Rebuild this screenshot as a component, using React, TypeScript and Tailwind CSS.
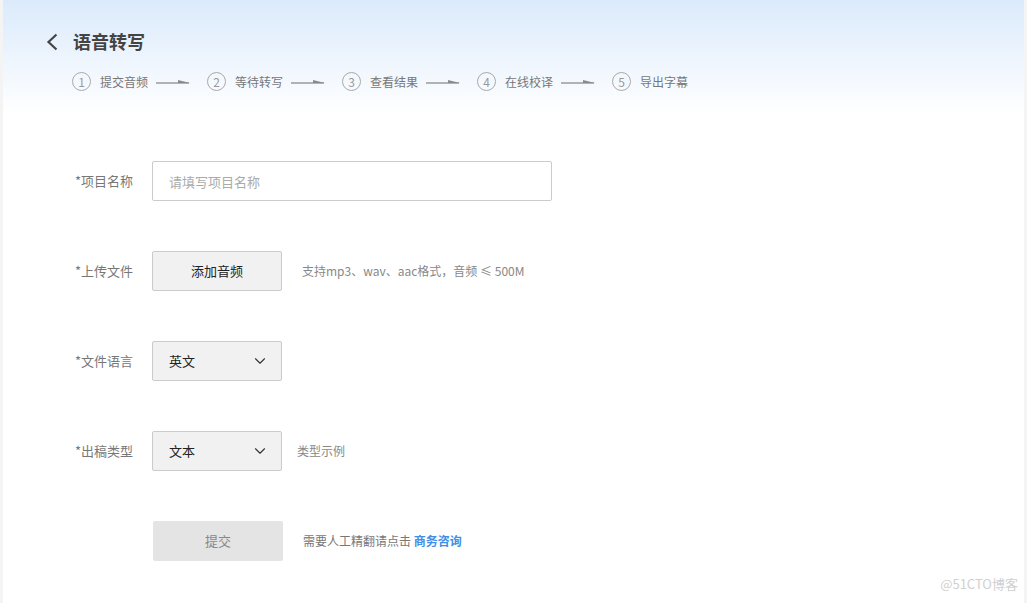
import { ChevronDown } from "lucide-react";

const STEPS = ["提交音频", "等待转写", "查看结果", "在线校译", "导出字幕"];
const FONT = "font-['Microsoft_YaHei','Noto_Sans_CJK_SC',sans-serif]";

function Arrow() {
  return (
    <svg width="34" height="8" viewBox="0 0 34 8" className="mx-2">
      <line x1="0" y1="5" x2="33" y2="5" stroke="#9a9a9a" strokeWidth="1.4" />
      <path d="M22 2 L34 5 L22 5 Z" fill="#8a8a8a" />
    </svg>
  );
}

function Label({ text }: { text: string }) {
  return <div className="w-[77px] shrink-0 whitespace-nowrap text-[13px] text-[#777]">{text}</div>;
}

function Select({ value }: { value: string }) {
  return (
    <div className="flex h-10 w-[130px] items-center justify-between rounded-[2px] border border-[#cbcbcb] bg-[#f1f1f1] pl-4 pr-3 text-[13px] text-[#222]">
      <span>{value}</span>
      <ChevronDown size={18} strokeWidth={1.5} className="text-[#333]" />
    </div>
  );
}

export default function App() {
  return (
    <div className={`flex h-[603px] w-full bg-[#f4f4f4] ${FONT}`}>
      <div className="relative mx-[3px] flex-1 bg-white">
        {/* header */}
        <div className="h-[115px] bg-gradient-to-b from-[#dbeafb] to-white pt-[28px]">
          <div className="flex items-center pl-[42px]">
            <svg width="14" height="18" viewBox="0 0 14 18">
              <path d="M11.5 1.5 L3.5 9 L11.5 16.5" fill="none" stroke="#444" strokeWidth="2.2" />
            </svg>
            <h1 className="ml-[14px] text-[18px] font-bold text-[#444]">语音转写</h1>
          </div>
          <div className="mt-[17px] flex items-center pl-[69px]">
            {STEPS.map((s, i) => (
              <div key={s} className="flex items-center">
                <div className="flex h-[19px] w-[19px] items-center justify-center rounded-full border border-[#a8a8a8] text-[12px] leading-none text-[#999]">
                  {i + 1}
                </div>
                <span className="ml-[9px] text-[12px] text-[#777]">{s}</span>
                {i < STEPS.length - 1 && (
                  <div className="mr-[9px] flex items-center">
                    <Arrow />
                  </div>
                )}
              </div>
            ))}
          </div>
        </div>

        {/* form */}
        <div className="mt-[46px] flex flex-col gap-[50px] pl-[72px]">
          <div className="flex h-10 items-center">
            <Label text="*项目名称" />
            <input
              className="h-10 w-[400px] rounded-[2px] border border-[#cbcbcb] px-4 text-[13px] placeholder:text-[#aaa] outline-none"
              placeholder="请填写项目名称"
            />
          </div>

          <div className="flex h-10 items-center">
            <Label text="*上传文件" />
            <button className="h-10 w-[130px] rounded-[2px] border border-[#cbcbcb] bg-[#f1f1f1] text-[13px] text-[#222]">
              添加音频
            </button>
            <span className="ml-5 text-[12px] text-[#888]">支持mp3、wav、aac格式，音频 ≤ 500M</span>
          </div>

          <div className="flex h-10 items-center">
            <Label text="*文件语言" />
            <Select value="英文" />
          </div>

          <div className="flex h-10 items-center">
            <Label text="*出稿类型" />
            <Select value="文本" />
            <span className="ml-[15px] text-[12px] text-[#888]">类型示例</span>
          </div>

          <div className="flex h-10 items-center">
            <div className="w-[78px] shrink-0" />
            <button className="h-10 w-[130px] rounded-[2px] bg-[#e4e4e4] text-[13px] text-[#888]">提交</button>
            <span className="ml-5 text-[12px] text-[#777]">
              需要人工精翻请点击 <a className="font-bold text-[#3f8ee8]">商务咨询</a>
            </span>
          </div>
        </div>

        <div className="absolute bottom-[10px] right-[6px] text-[13px] text-[#d0d0d0]">@51CTO博客</div>
      </div>
    </div>
  );
}
